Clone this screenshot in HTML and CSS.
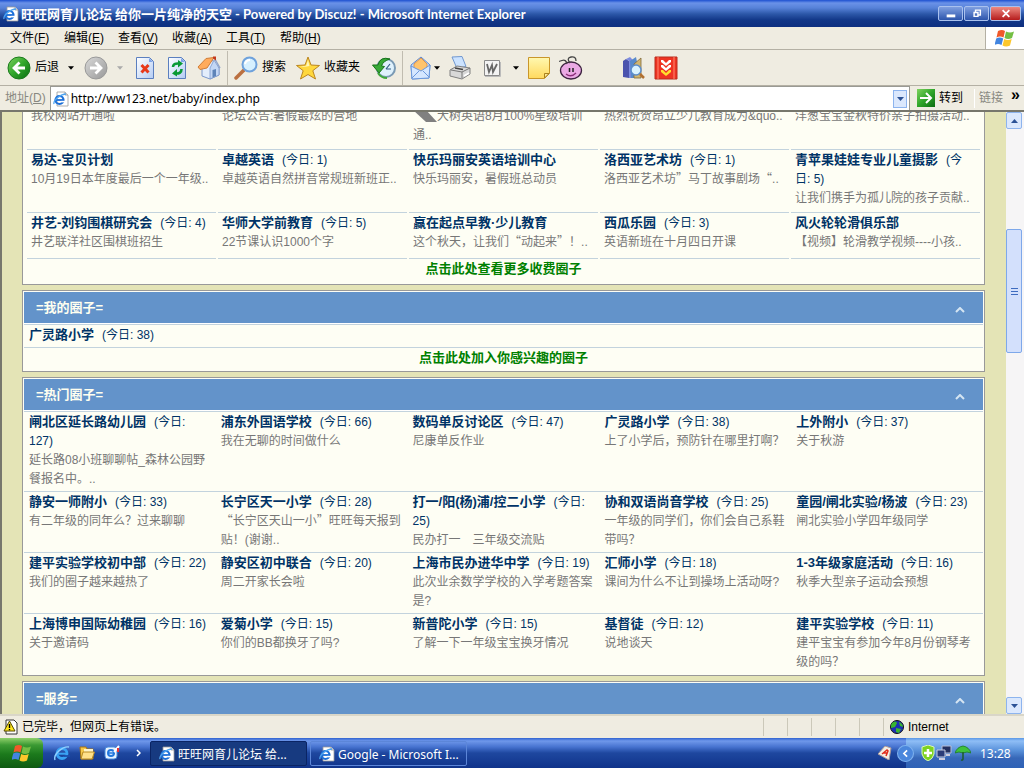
FILE: index.html
```html
<!DOCTYPE html>
<html lang="zh-CN">
<head>
<meta charset="utf-8">
<title>旺旺网育儿论坛 给你一片纯净的天空</title>
<link rel="stylesheet" href="styles.css">
</head>
<body>
<svg class="defs" aria-hidden="true">
  <defs>
    <linearGradient id="gGreen" x1="0" y1="0" x2="1" y2="1"><stop offset="0" stop-color="#7fd35f"/><stop offset=".5" stop-color="#2fa52a"/><stop offset="1" stop-color="#0b6b10"/></linearGradient>
    <linearGradient id="gGray" x1="0" y1="0" x2="1" y2="1"><stop offset="0" stop-color="#d9d9d9"/><stop offset="1" stop-color="#989898"/></linearGradient>
    <linearGradient id="gPage" x1="0" y1="0" x2="1" y2="1"><stop offset="0" stop-color="#ffffff"/><stop offset="1" stop-color="#b4ccf4"/></linearGradient>
    <linearGradient id="gNote" x1="0" y1="0" x2="0" y2="1"><stop offset="0" stop-color="#fff8b0"/><stop offset="1" stop-color="#ffd95e"/></linearGradient>
    <symbol id="ie" viewBox="0 0 16 16">
      <path d="M4 1h8l3 3v11H4z" fill="#fff" stroke="#999" stroke-width=".8"/><path d="M12 1v3h3" fill="#ddd" stroke="#999" stroke-width=".8"/>
      <circle cx="6.5" cy="9" r="4" fill="none" stroke="#1c6fd8" stroke-width="2.2"/><path d="M3 9h7.5" stroke="#1c6fd8" stroke-width="1.8"/><path d="M8.500 10.600h4" stroke="#fff" stroke-width="1.600"/>
      <path d="M1 13C0 9 8 3 13 3" fill="none" stroke="#4fa4f0" stroke-width="1.300"/>
    </symbol>
    <symbol id="iebig" viewBox="0 0 16 16">
      <circle cx="8" cy="8.500" r="5" fill="none" stroke="#39a2f4" stroke-width="2.800"/><path d="M4 8.700h9.500" stroke="#39a2f4" stroke-width="2"/><path d="M10 11h6" stroke="#1b4dac" stroke-width="1.800"/>
      <path d="M1 15C-1 9 9 1 15 2" fill="none" stroke="#8fd0ff" stroke-width="1.400"/>
    </symbol>
    <symbol id="flag" viewBox="0 0 20 18">
      <path d="M3 2q4-2 7 0L8.500 8.500q-3.500-2-7 0z" fill="#f0592a"/><path d="M11 2.500q4 2 8 0l-2 6.500q-4 2-7.500 0z" fill="#74bf44"/>
      <path d="M1.200 9.600q3.500-2 7 0L6.500 16q-3.500-2-7 0z" fill="#4285e0"/><path d="M9.200 10q3.500 2 7.500 0L15 16.500q-4 2-7.500 0z" fill="#fcc72c"/>
    </symbol>
    <symbol id="down" viewBox="0 0 7 4"><path d="M0 0h7L3.500 4z" fill="currentColor"/></symbol>
    <symbol id="fold" viewBox="0 0 10 6"><path d="M1 5l4-4 4 4" fill="none" stroke="#d5e5f2" stroke-width="2"/></symbol>
  </defs>
</svg>

<header class="titlebar">
  <svg class="i16"><use href="#ie"/></svg>
  <h1 class="caption"><span class="caption-cn">旺旺网育儿论坛 给你一片纯净的天空</span> - Powered by Discuz! - Microsoft Internet Explorer</h1>
  <div class="winbtns">
    <button class="winbtn" aria-label="最小化"><svg viewBox="0 0 24 13"><path d="M8 9h9" stroke="#fff" stroke-width="3"/></svg></button>
    <button class="winbtn" aria-label="还原"><svg viewBox="0 0 24 13"><path d="M11 5V3h5v5h-2M9.500 5.500h4v4h-4z" fill="none" stroke="#fff" stroke-width="1.500"/></svg></button>
    <button class="winbtn close" aria-label="关闭"><svg viewBox="0 0 30 13"><path d="M12 3l7 7M19 3l-7 7" stroke="#fff" stroke-width="1.800"/></svg></button>
  </div>
</header>

<nav class="menubar">
  <button>文件(<u>F</u>)</button><button>编辑(<u>E</u>)</button><button>查看(<u>V</u>)</button><button>收藏(<u>A</u>)</button><button>工具(<u>T</u>)</button><button>帮助(<u>H</u>)</button>
  <div class="brand"><svg class="flag"><use href="#flag"/></svg></div>
</nav>

<div class="toolbar">
  <button class="labelled"><svg class="i24" viewBox="0 0 24 24"><circle cx="12" cy="12" r="11" fill="url(#gGreen)" stroke="#1a7a1c"/><path d="M18 12H8M12.500 6.500L7 12l5.500 5.500" fill="none" stroke="#fff" stroke-width="2.800"/></svg>后退</button>
  <svg class="arrow"><use href="#down"/></svg>
  <button aria-label="前进"><svg class="i24" viewBox="0 0 24 24"><circle cx="12" cy="12" r="11" fill="url(#gGray)" stroke="#999"/><path d="M6 12h10M11.500 6.500L17 12l-5.500 5.500" fill="none" stroke="#fff" stroke-width="2.800"/></svg></button>
  <svg class="arrow dim"><use href="#down"/></svg>
  <button aria-label="停止"><svg class="i24" viewBox="0 0 24 24"><path d="M3.500 1.500h13l4 4v17h-17z" fill="url(#gPage)" stroke="#5b7fbf"/><path d="M16 2v4h4" fill="#7ea4e8"/><path d="M8.500 9l7 7.500M15.500 9l-7 7.500" stroke="#e8391a" stroke-width="3"/></svg></button>
  <button aria-label="刷新"><svg class="i24" viewBox="0 0 24 24"><path d="M3.500 1.500h13l4 4v17h-17z" fill="url(#gPage)" stroke="#5b7fbf"/><path d="M16 2v4h4" fill="#7ea4e8"/><path d="M8 11q0-4 6-3.500M16.500 13q0 5-6 4.500" fill="none" stroke="#0a9a35" stroke-width="2.600"/><path d="M13 4l5 3.500-5 4zM12 13l-5 4.500 5 3z" fill="#0a9a35"/></svg></button>
  <button aria-label="主页"><svg class="i24" viewBox="0 0 24 24"><path d="M5 11l9-8 8 9v7l-9 4-8-3z" fill="#e3edfb" stroke="#7b98cc"/><path d="M13 12v11l9-4v-7l-5-8z" fill="#c3d7f5" stroke="#7b98cc" stroke-width=".8"/><path d="M1 11L9 2.500l8-1L10 12l-7 1.500z" fill="#ffab5c" stroke="#d07d38"/><path d="M17 1.500L23 12" stroke="#8fa4cc" stroke-width="1.500"/><path d="M15.500 14l3.500-1v7l-3.500 1.500z" fill="#5d83b8"/><path d="M16 .5h3v4l-3-2z" fill="#c43a1e"/></svg></button>
  <span class="sep"></span>
  <button class="labelled"><svg class="i24" viewBox="0 0 24 24"><path d="M2 22l8-8" stroke="#bb7040" stroke-width="3.500" stroke-linecap="round"/><circle cx="15.500" cy="8.500" r="7" fill="#d6f0ff" stroke="#6fa2dc" stroke-width="2"/><path d="M11 8q1-4 5-4" fill="none" stroke="#fff" stroke-width="2"/></svg>搜索</button>
  <button class="labelled star"><svg class="i24" viewBox="0 0 24 24"><path d="M12 1l3 8 8.500.5-6.700 5.200L19.500 23 12 18.500 4.500 23l2.700-8.300L.5 9.500 9 9z" fill="#ffd83d" stroke="#bb8620"/><path d="M12 4l1.500 6-6 1-3-.500 5.500-.5z" fill="#fff6b8"/></svg>收藏夹</button>
  <button aria-label="历史"><svg class="i24" viewBox="0 0 24 24"><circle cx="14" cy="12" r="9" fill="#dff1fc" stroke="#7a9ab4" stroke-width="2"/><path d="M14 13l4-5M14 13h5" fill="none" stroke="#315c86" stroke-width="1.200"/><path d="M18 3Q8 0 6 9H.5L7 17l5.500-6.500L9.500 10Q11 5 18 3z" fill="#38a936" stroke="#177319"/><path d="M6 17q3 5 9 5" fill="none" stroke="#40a83b" stroke-width="2"/></svg></button>
  <span class="sep"></span>
  <button class="split" aria-label="邮件"><svg class="i24" viewBox="0 0 24 24"><path d="M2 9L12 1l9 8-1 13L3 23z" fill="#c4dcfb" stroke="#5c88cf"/><path d="M5 8l7-6 6 6v5l-6 4-7-4z" fill="#ffc46d" stroke="#dd9650"/><path d="M2 10l10 5 9-6-1 13L3 23z" fill="#d5e7ff" stroke="#6b98dc"/><path d="M3 22l7-7M20 21l-6-6" stroke="#6b98dc"/></svg><svg class="arrow"><use href="#down"/></svg></button>
  <button aria-label="打印"><svg class="i24" viewBox="0 0 24 24"><path d="M4 1l10-.5 4 10-9 2z" fill="#cce3ff" stroke="#7097cf"/><path d="M2 14l7-4 13 2v6l-8 5-12-3z" fill="#d8d8d8" stroke="#808080"/><path d="M3 14l11 2 8-4M14 16v6" fill="none" stroke="#777"/><path d="M7 12l8 1.500" stroke="#444" stroke-width="1.500"/><path d="M16 20l5-3" stroke="#fff" stroke-width="2"/></svg></button>
  <button class="split word" aria-label="编辑"><svg class="i24" viewBox="0 0 24 24"><path d="M4.500 4.500h15v15h-15z" fill="#f3f3f3" stroke="#8a8a8a"/><path d="M7 8l2 8 3-7 1 7 4-8" fill="none" stroke="#666" stroke-width="1.800"/><path d="M5 20.500h15.500V6" fill="none" stroke="#bbb"/></svg><svg class="arrow"><use href="#down"/></svg></button>
  <button aria-label="便笺"><svg class="i24" viewBox="0 0 24 24"><path d="M1.500 1.500h21v16l-5 5h-16z" fill="url(#gNote)" stroke="#c9962a"/><path d="M22 17.500h-4.500V22z" fill="#ffe791" stroke="#a8801f"/></svg></button>
  <button aria-label="宠物"><svg class="i24" viewBox="0 0 24 24"><ellipse cx="12" cy="14.500" rx="10.500" ry="8.500" fill="#eaa9e4" stroke="#3c2240" stroke-width="1.300"/><path d="M11 7Q7 2 12 1q5-1 5 4M8 8Q7 3 3 4.500T0 5" fill="none" stroke="#444" stroke-width="1.300"/><path d="M10.500 12v4M14 12v4" stroke="#222" stroke-width="1.500"/><path d="M7 18q5 4 10-1" fill="none" stroke="#8c2c7a" stroke-width="1.300"/></svg></button>
  <button class="far" aria-label="信息检索"><svg class="i24" viewBox="0 0 24 24"><path d="M1 5l3-2 3 2v17l-6-1z" fill="#4b53ae"/><path d="M4 3l4-2 3 3v18H7V5z" fill="#7d8bdf"/><path d="M8 5l6-4 1 5-3 4v12h-3z" fill="#578acb"/><path d="M12 8l7-6v20h-7z" fill="#d1b670" stroke="#806a3a" stroke-width=".8"/><circle cx="14" cy="14" r="5" fill="#d9f3ff" stroke="#5b8dca" stroke-width="1.500"/><path d="M18 18l4 4" stroke="#b27030" stroke-width="2.500"/></svg></button>
  <button aria-label="下载"><svg class="i24" viewBox="0 0 24 24"><path d="M1 1h22v22H1z" fill="#ee3322" stroke="#b82d1c"/><path d="M4 1v22M20 1v22" stroke="#ff8a70"/><path d="M7 4h2l3 3 3-3h2v2l-5 4-5-4zM7 9h2l3 3 3-3h2v2l-5 4-5-4z" fill="#fff"/><path d="M7 14h2l3 3 3-3h2v2l-5 4-5-4z" fill="#ffde2e"/></svg></button>
</div>

<div class="addressbar">
  <label for="url">地址(<u>D</u>)</label>
  <div class="urlbox">
    <svg class="i16"><use href="#ie"/></svg>
    <input id="url" type="text" value="http://ww123.net/baby/index.php">
    <button class="drop" aria-label="历史地址"><svg><use href="#down"/></svg></button>
  </div>
  <button class="go"><svg class="i18" viewBox="0 0 18 18"><path d="M0 0h18v18H0z" fill="url(#gGreen)"/><path d="M3 9h10M9 4l5 5-5 5" fill="none" stroke="#fff" stroke-width="2"/></svg>转到</button>
  <span class="links">链接</span><button class="more" aria-label="更多链接">»</button>
</div>

<div class="viewport">
  <main class="page">
    <section class="panel first">
      <div class="grid paid">
        <div class="cell"><p>我校网站开通啦</p></div>
        <div class="cell"><p>论坛公告:暑假最炫的营地</p></div>
        <div class="cell"><p><svg class="slash" viewBox="0 0 24 12"><path d="M0 0h13l11 12H13z" fill="#808080"/></svg>大树英语8月100%星级培训<br>通..</p></div>
        <div class="cell"><p>热烈祝贺昂立少儿教育成为&amp;quo..</p></div>
        <div class="cell"><p>洋葱宝宝金秋特价亲子拍摄活动..</p></div>

        <div class="cell"><h3><a href="#">易达-宝贝计划</a></h3><p>10月19日本年度最后一个一年级..</p></div>
        <div class="cell"><h3><a href="#">卓越英语</a><span>(今日: 1)</span></h3><p>卓越英语自然拼音常规班新班正..</p></div>
        <div class="cell"><h3><a href="#">快乐玛丽安英语培训中心</a></h3><p>快乐玛丽安，暑假班总动员</p></div>
        <div class="cell"><h3><a href="#">洛西亚艺术坊</a><span>(今日: 1)</span></h3><p>洛西亚艺术坊<q>”</q>马丁故事剧场<q>“</q>..</p></div>
        <div class="cell"><h3><a href="#">青苹果娃娃专业儿童摄影</a><span>(今<br>日: 5)</span></h3><p>让我们携手为孤儿院的孩子贡献..</p></div>

        <div class="cell"><h3><a href="#">井艺-刘钧围棋研究会</a><span>(今日: 4)</span></h3><p>井艺联洋社区围棋班招生</p></div>
        <div class="cell"><h3><a href="#">华师大学前教育</a><span>(今日: 5)</span></h3><p>22节课认识1000个字</p></div>
        <div class="cell"><h3><a href="#">赢在起点早教·少儿教育</a></h3><p>这个秋天，让我们<q>“</q>动起来<q>”</q>！..</p></div>
        <div class="cell"><h3><a href="#">西瓜乐园</a><span>(今日: 3)</span></h3><p>英语新班在十月四日开课</p></div>
        <div class="cell"><h3><a href="#">风火轮轮滑俱乐部</a></h3><p>【视频】轮滑教学视频----小孩..</p></div>
      </div>
      <a class="morelink" href="#">点击此处查看更多收费圈子</a>
    </section>

    <section class="panel">
      <h2>=我的圈子=<button aria-label="收起"><svg><use href="#fold"/></svg></button></h2>
      <div class="single"><h3><a href="#">广灵路小学</a><span>(今日: 38)</span></h3></div>
      <a class="morelink" href="#">点击此处加入你感兴趣的圈子</a>
    </section>

    <section class="panel">
      <h2>=热门圈子=<button aria-label="收起"><svg><use href="#fold"/></svg></button></h2>
      <div class="grid hot">
        <div class="cell"><h3><a href="#">闸北区延长路幼儿园</a><span>(今日:<br>127)</span></h3><p>延长路08小班聊聊帖_森林公园野<br>餐报名中。..</p></div>
        <div class="cell"><h3><a href="#">浦东外国语学校</a><span>(今日: 66)</span></h3><p>我在无聊的时间做什么</p></div>
        <div class="cell"><h3><a href="#">数码单反讨论区</a><span>(今日: 47)</span></h3><p>尼康单反作业</p></div>
        <div class="cell"><h3><a href="#">广灵路小学</a><span>(今日: 38)</span></h3><p>上了小学后，预防针在哪里打啊？</p></div>
        <div class="cell"><h3><a href="#">上外附小</a><span>(今日: 37)</span></h3><p>关于秋游</p></div>

        <div class="cell"><h3><a href="#">静安一师附小</a><span>(今日: 33)</span></h3><p>有二年级的同年么？过来聊聊</p></div>
        <div class="cell"><h3><a href="#">长宁区天一小学</a><span>(今日: 28)</span></h3><p><q>“</q>长宁区天山一小<q>”</q>旺旺每天报到<br>贴！(谢谢..</p></div>
        <div class="cell"><h3><a href="#">打一/阳(杨)浦/控二小学</a><span>(今日:<br>25)</span></h3><p>民办打一　三年级交流贴</p></div>
        <div class="cell"><h3><a href="#">协和双语尚音学校</a><span>(今日: 25)</span></h3><p>一年级的同学们，你们会自己系鞋<br>带吗？</p></div>
        <div class="cell"><h3><a href="#">童园/闸北实验/杨波</a><span>(今日: 23)</span></h3><p>闸北实验小学四年级同学</p></div>

        <div class="cell"><h3><a href="#">建平实验学校初中部</a><span>(今日: 22)</span></h3><p>我们的圈子越来越热了</p></div>
        <div class="cell"><h3><a href="#">静安区初中联合</a><span>(今日: 20)</span></h3><p>周二开家长会啦</p></div>
        <div class="cell"><h3><a href="#">上海市民办进华中学</a><span>(今日: 19)</span></h3><p>此次业余数学学校的入学考题答案<br>是?</p></div>
        <div class="cell"><h3><a href="#">汇师小学</a><span>(今日: 18)</span></h3><p>课间为什么不让到操场上活动呀?</p></div>
        <div class="cell"><h3><a href="#">1-3年级家庭活动</a><span>(今日: 16)</span></h3><p>秋季大型亲子运动会预想</p></div>

        <div class="cell"><h3><a href="#">上海博申国际幼稚园</a><span>(今日: 16)</span></h3><p>关于邀请码</p></div>
        <div class="cell"><h3><a href="#">爱菊小学</a><span>(今日: 15)</span></h3><p>你们的BB都换牙了吗?</p></div>
        <div class="cell"><h3><a href="#">新普陀小学</a><span>(今日: 15)</span></h3><p>了解一下一年级宝宝换牙情况</p></div>
        <div class="cell"><h3><a href="#">基督徒</a><span>(今日: 12)</span></h3><p>说地谈天</p></div>
        <div class="cell"><h3><a href="#">建平实验学校</a><span>(今日: 11)</span></h3><p>建平宝宝有参加今年8月份钢琴考<br>级的吗？</p></div>
      </div>
    </section>

    <section class="panel">
      <h2>=服务=<button aria-label="收起"><svg><use href="#fold"/></svg></button></h2>
    </section>
  </main>
  <div class="scrollbar">
    <button class="scrollbtn" aria-label="向上"><svg class="up"><use href="#down"/></svg></button>
    <div class="track"><div class="thumb"><i></i><i></i><i></i></div></div>
    <button class="scrollbtn" aria-label="向下"><svg><use href="#down"/></svg></button>
  </div>
</div>

<footer class="statusbar">
  <svg class="i16" viewBox="0 0 16 16"><path d="M3 1h8l3 3v11H3z" fill="#fff" stroke="#333"/><path d="M6.500 2L12 12H1z" fill="#ffe61c" stroke="#554b00"/><path d="M6.500 5v4M6.500 10v1.300" stroke="#000" stroke-width="1.400"/></svg>
  <span class="message">已完毕，但网页上有错误。</span>
  <span class="slot"></span><span class="slot"></span><span class="slot"></span><span class="slot"></span><span class="slot"></span>
  <span class="zone"><svg class="i14" viewBox="0 0 14 14"><circle cx="7" cy="7" r="6.500" fill="#1c2fb4" stroke="#111"/><path d="M2 3q4-3 5 0L5 7 1 8q-.5-3 1-5zM9 2q4 2 4 5l-3-1zM6 8l5 1-2 4-3-1z" fill="#39b52f"/></svg>Internet</span>
</footer>

<div class="taskbar">
  <button class="start" aria-label="开始"><svg class="flag"><use href="#flag"/></svg></button>
  <div class="quick">
    <button aria-label="Internet Explorer"><svg class="i16"><use href="#iebig"/></svg></button>
    <button aria-label="文件夹"><svg class="i16" viewBox="0 0 16 16"><path d="M1 2h6l1 2h6v10H2z" fill="#f5c84a" stroke="#a87514"/><path d="M5 4h9v6H5z" fill="#fff4c8"/><path d="M4 7h11.500L13 14H2z" fill="#ffe08a" stroke="#b98a22"/></svg></button>
    <button aria-label="显示桌面"><svg class="i16" viewBox="0 0 16 16"><rect x="1" y="2" width="12" height="12" rx="3" fill="#e8f4ff" stroke="#4b8ddc"/><circle cx="7" cy="8" r="3" fill="none" stroke="#2277dd" stroke-width="2"/><path d="M5 8h6" stroke="#2277dd" stroke-width="1.500"/><path d="M10 7l5-6" stroke="#fff" stroke-width="2"/><path d="M14 3v4" stroke="#e33" stroke-width="2"/></svg></button>
    <button class="chev" aria-label="更多"><svg viewBox="0 0 5 8"><path d="M1 1l3 3-3 3" fill="none" stroke="#fff" stroke-width="1.500"/></svg></button>
  </div>
  <button class="task active"><svg class="i16"><use href="#ie"/></svg>旺旺网育儿论坛 给...</button>
  <button class="task"><svg class="i16"><use href="#ie"/></svg>Google - Microsoft I...</button>
  <svg class="i14 pen" viewBox="0 0 14 14"><path d="M0 8l7-8 6 2-2 12z" fill="#f4eee4" stroke="#a99"/><path d="M4 8l5-4 1 1-2 5M5 7h4" fill="none" stroke="#e02a1a" stroke-width="1.500"/></svg>
  <div class="tray">
    <button class="hide" aria-label="隐藏图标"><svg viewBox="0 0 16 16"><circle cx="8" cy="8" r="7.500" fill="#4a86dc" stroke="#7db1ee"/><path d="M9.500 5l-3 3 3 3" fill="none" stroke="#fff" stroke-width="1.600"/></svg></button>
    <svg class="i16" viewBox="0 0 16 16"><path d="M8 0l6 2v7q-1 5-6 7-5-2-6-7V2z" fill="#7ed321" stroke="#d9f7b8"/><path d="M8 4v8M4 8h8" stroke="#fff" stroke-width="2.500"/></svg>
    <svg class="i16" viewBox="0 0 16 16"><path d="M6 1h9v7H6z" fill="#23305f" stroke="#b8bfd8"/><path d="M1 5h8v7H1z" fill="#2b3c78" stroke="#c7cde0"/><path d="M3 14h6M10 10h4" stroke="#ccd" stroke-width="2"/></svg>
    <svg class="i16 umbrella" viewBox="0 0 16 16"><path d="M0 8Q2 2 8 1q6 1 8 7l-4-1-4 1-4-1z" fill="#3fc13c" stroke="#1c7a22" stroke-width=".8"/><path d="M8 7v7q0 1.500-2 1" fill="none" stroke="#1d5c2a" stroke-width="1.500"/></svg>
    <time class="clock">13:28</time>
  </div>
</div>
</body>
</html>
```

FILE: styles.css
```css
* { box-sizing: border-box; }

body {
  margin: 0;
  height: 100vh;
  display: flex;
  flex-direction: column;
  overflow: hidden;
  background: #efece1;
  color: #000;
  font: 12px/19px "Liberation Sans", "Noto Sans CJK SC", sans-serif;
}

h1, h2, h3, p { margin: 0; font-size: 12px; font-weight: normal; }
a { color: inherit; text-decoration: none; }
button, input { font: inherit; color: inherit; border: 0; padding: 0; background: none; }
button { display: flex; align-items: center; white-space: nowrap; }
svg { display: block; flex: none; }

.defs { position: absolute; width: 0; height: 0; }
.i14 { width: 14px; height: 14px; }
.i16 { width: 16px; height: 16px; }
.i18 { width: 18px; height: 18px; }
.i24 { width: 24px; height: 24px; }
.arrow { width: 6px; height: 4px; }
.dim { color: #aaa; }
.flag { width: 20px; height: 18px; }

/* Title bar */
.titlebar {
  display: flex;
  align-items: center;
  gap: 2px;
  flex: none;
  height: 27px;
  padding: 0 3px;
  color: #fff;
  background: linear-gradient(#1d50d0, #6a92e8 3px, #5681d8 8px, #2c57a8 14px, #123788 20px, #0d2f80);
}
.caption { flex: 1; white-space: nowrap; font: bold 13px/19px Lato, sans-serif; }
.caption-cn { font: bold 13px/19px "Noto Sans CJK SC", sans-serif; }
.winbtns { display: flex; gap: 1px; }
.winbtn {
  width: 25px;
  height: 15px;
  border: 1px solid #a9c1ee;
  border-radius: 2px;
  background: linear-gradient(#7f9fe0, #2d55ac);
}
.winbtn svg { width: 100%; height: 13px; }
.close { width: 31px; background: linear-gradient(#ee8a80, #b51c1c); }

/* Menu and tool bars */
.menubar {
  display: flex;
  align-items: center;
  gap: 16px;
  flex: none;
  height: 23px;
  padding-left: 10px;
  border-bottom: 1px solid #b4b0a4;
}
.menubar button { width: 38px; }
.brand {
  display: flex;
  align-self: stretch;
  align-items: center;
  justify-content: center;
  width: 39px;
  margin-left: auto;
  border-left: 1px solid #b4b0a4;
  background: #fff;
}
.toolbar {
  display: flex;
  align-items: center;
  gap: 8px;
  flex: none;
  height: 36px;
  padding-left: 7px;
  border-bottom: 1px solid #b4b0a4;
}
.toolbar > .arrow { margin: 0 2px 0 1px; }
.labelled { gap: 4px; }
.star { margin-left: 2px; }
.star + button { margin-left: 4px; }
.split { gap: 1px; }
.word { gap: 9px; }
.far { margin-left: 31px; }
.sep { width: 1px; height: 34px; margin: 0 -2px; background: #c0bcb0; }

/* Address bar */
.addressbar {
  display: flex;
  align-items: center;
  flex: none;
  height: 26px;
  padding-left: 5px;
  border-bottom: 2px solid #77776c;
}
.addressbar label, .links { color: #888880; }
.urlbox {
  display: flex;
  align-items: center;
  gap: 2px;
  flex: 1;
  align-self: stretch;
  margin-left: 4px;
  padding: 0 2px 0 2px;
  border: 1px solid #9a9a94;
  border-bottom: 0;
  background: #fff;
}
.urlbox input { flex: 1; outline: 0; font: 12px/19px "Noto Sans", sans-serif; }
.drop {
  justify-content: center;
  width: 14px;
  height: 18px;
  border: 1px solid #8db4ee;
  background: #dbe8fd;
  color: #2c5296;
}
.drop svg, .scrollbtn svg { width: 7px; height: 4px; }
.go { gap: 4px; margin: 0 11px 0 7px; }
.links { padding-left: 4px; border-left: 1px solid #fff; }
.more { margin: -8px 4px 0 8px; font-size: 16px; font-weight: bold; }

/* Forum page */
.viewport { display: flex; flex: 1; min-height: 0; border-left: 2px solid #77776c; }
.page {
  flex: 1;
  min-width: 0;
  overflow: hidden;
  padding: 0 21px 0 20px;
  background: #e4e4b6;
}
.panel { margin-bottom: 5px; padding: 1px; border: 1px solid #999; background: #fefef4; }
.first { margin-top: -8px; }
.panel h2 {
  display: flex;
  align-items: center;
  height: 32px;
  padding: 0 18px 0 12px;
  border-bottom: 1px solid #fff;
  background: #6393ca;
  color: #fffff0;
  font-size: 13px;
  font-weight: bold;
}
.panel h2 button { margin-left: auto; }
.panel h2 svg { width: 10px; height: 6px; margin-top: 4px; }
.grid { display: grid; grid-template-columns: repeat(5, minmax(0, 1fr)); }
.cell { padding: 1px 0 2px 5px; border-bottom: 1px solid #c3d3dd; white-space: nowrap; }
.paid { column-gap: 2px; padding: 0 3px; }
.paid .cell { padding: 1px 0 4px 4px; }
.paid .cell:nth-last-child(-n + 5) { padding-bottom: 6px; }
.hot, .single { border-top: 1px solid #c3d3dd; }
.hot .cell:nth-last-child(-n + 5) { border-bottom: 0; }
.single { padding: 1px 0 2px 5px; border-bottom: 1px solid #c3d3dd; }
h3 { color: #003366; }
h3 a { font-size: 13px; font-weight: bold; line-height: 15px; }
h3 span { margin-left: 8px; }
.cell p { color: #777; }
q { quotes: none; font-family: "Noto Sans CJK SC", sans-serif; line-height: 15px; }
.slash { display: inline-block; width: 24px; height: 12px; vertical-align: -2px; }
.morelink {
  display: block;
  height: 22px;
  color: #008000;
  font-size: 13px;
  font-weight: bold;
  text-align: center;
}
.first .morelink { height: 24px; }

/* Scroll bar */
.scrollbar { display: flex; flex-direction: column; flex: none; width: 18px; padding-right: 2px; background: #f6f5f6; }
.scrollbtn {
  justify-content: center;
  flex: none;
  height: 17px;
  border: 1px solid #8db4ee;
  border-radius: 2px;
  background: #dbe8fd;
  color: #2c5296;
}
.up { transform: rotate(180deg); }
.track { flex: 1; padding-top: 100px; }
.thumb {
  display: flex;
  flex-direction: column;
  align-items: center;
  justify-content: center;
  gap: 2px;
  height: 124px;
  border: 1px solid #7ea8ea;
  border-radius: 2px;
  background: #d3e0fc;
}
.thumb i { width: 7px; height: 1px; background: #3e6cc0; }

/* Status bar */
.statusbar {
  display: flex;
  align-items: center;
  flex: none;
  height: 24px;
  padding-left: 3px;
  border-top: 2px solid #d9d6c8;
}
.message { flex: 1; margin-left: 3px; }
.slot { width: 24px; height: 18px; border-left: 1px solid #cbc8b9; }
.zone { display: flex; align-items: center; gap: 4px; width: 141px; height: 18px; padding-left: 6px; border-left: 1px solid #cbc8b9; }

/* Task bar */
.taskbar {
  display: flex;
  align-items: center;
  flex: none;
  height: 30px;
  color: #fff;
  background: linear-gradient(#2f62d0, #6f98ea 3px, #4672cf 9px, #1e479f 15px, #10338a);
}
.start {
  justify-content: center;
  width: 43px;
  height: 30px;
  border-radius: 0 6px 6px 0;
  background: linear-gradient(#8fd06a, #3c9a34 7px, #1c7a1c 16px, #0e5a12);
}
.quick { display: flex; align-items: center; gap: 9px; width: 107px; padding-left: 11px; }
.chev { margin-left: 7px; }
.chev svg { width: 5px; height: 8px; }
.task {
  gap: 3px;
  width: 157px;
  height: 25px;
  margin-right: 3px;
  padding: 2px 8px 0;
  border: 1px solid #5c86d8;
  border-radius: 2px;
  font: 12px/19px "Noto Sans", "Noto Sans CJK SC", sans-serif;
}
.active { border-color: #0a2464; background: #173a80; }
.pen { margin-left: auto; margin-right: 14px; }
.tray {
  display: flex;
  align-items: center;
  align-self: stretch;
  width: 118px;
  background: linear-gradient(#5a97e6, #8fbef6 3px, #5b93dc 12px, #3767b8 20px, #2e62b6);
}
.hide { margin: 0 6px 0 -9px; }
.hide svg { width: 17px; height: 17px; }
.umbrella { margin-left: 3px; }
.clock { margin-left: 9px; font: 12px/19px "Noto Sans", sans-serif; }
```
